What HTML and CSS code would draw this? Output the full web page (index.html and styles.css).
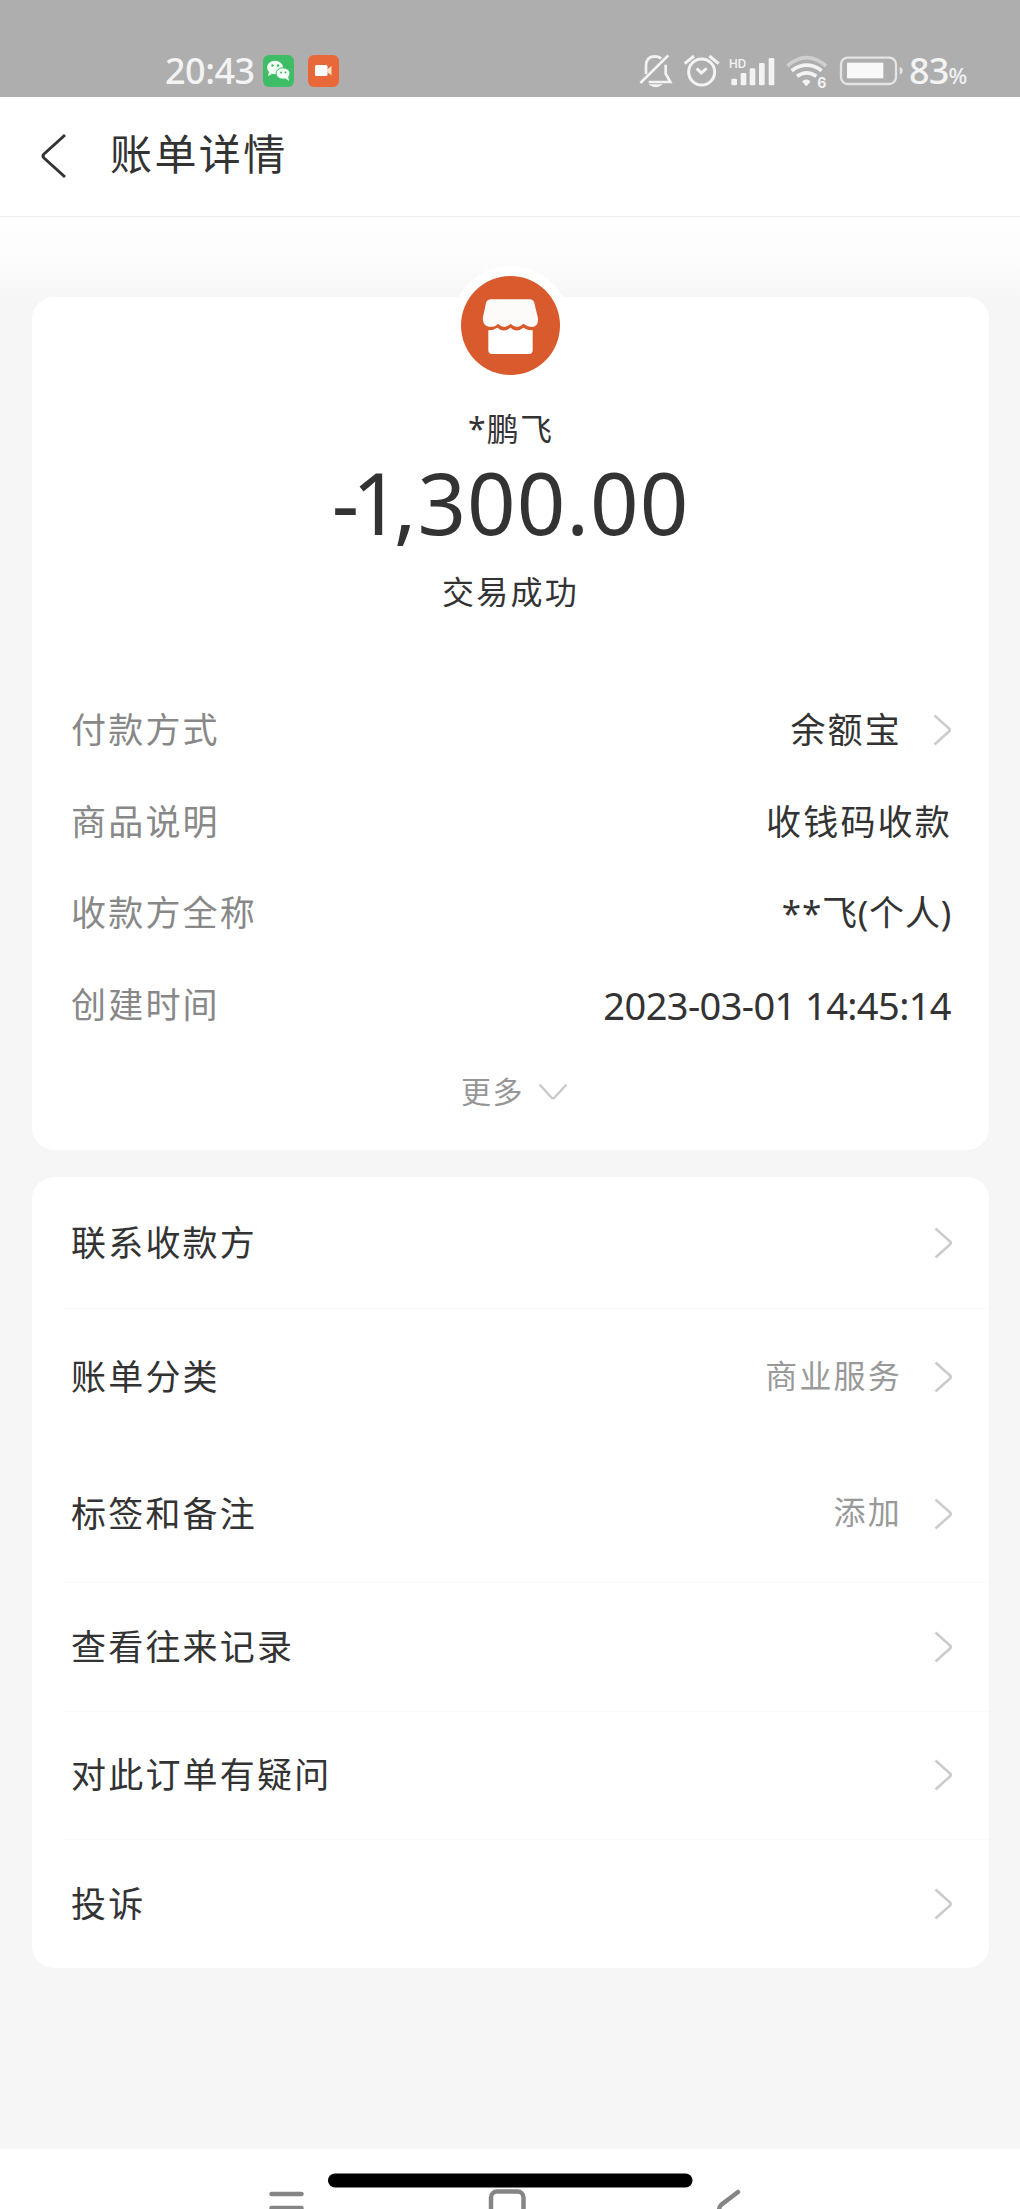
FILE: index.html
```
<!DOCTYPE html>
<html lang="zh-CN">
<head>
<meta charset="utf-8">
<title>账单详情</title>
<link rel="stylesheet" href="styles.css">
</head>
<body>
<svg width="0" height="0" class="defs">
  <symbol id="chevron" viewBox="0 0 18 32"><path d="M1.500 1.500 16 14.500q1.500 1.500 0 3L1.500 30.500" fill="none" stroke="currentColor" stroke-width="2.600"/></symbol>
</svg>
<div class="status">
  <span class="time">20:43</span>
  <svg class="app-wechat" width="31" height="32" viewBox="0 0 31 32">
    <rect width="31" height="32" rx="6" fill="#3fbd66"/>
    <ellipse cx="12" cy="12.500" rx="8" ry="6.800" fill="#f4fff6"/><path d="m6 17-1 4 4-2z" fill="#f4fff6"/>
    <ellipse cx="20" cy="18.500" rx="7" ry="5.700" fill="#f4fff6" stroke="#3fbd66"/><path d="m22 23 4 3-1-5z" fill="#f4fff6"/>
    <g fill="#3fbd66"><circle cx="9.500" cy="10.500" r="1.200"/><circle cx="15" cy="10.500" r="1.200"/><circle cx="18" cy="17.500" r="1"/><circle cx="22.500" cy="17.500" r="1"/></g>
  </svg>
  <svg class="app-video" width="31" height="32" viewBox="0 0 31 32">
    <rect width="31" height="32" rx="6" fill="#e8683a"/>
    <rect x="7" y="10" width="12.500" height="11" rx="1.500" fill="#fff"/><path d="m19 14.500 4.500-3.500v9.500L19 17z" fill="#f7e4c6"/>
  </svg>
  <svg class="signals" width="285" height="40" viewBox="50 35 855 120" fill="none" stroke="#f3f3f3" stroke-width="8">
    <path d="M60 128 144 45M77 101V78q0-29 25-30 12 0 21 6M136 73v27l14 25H85" />
    <path d="M91 134q15 10 30 0z" fill="#f3f3f3" stroke-width="4"/>
    <circle cx="244" cy="95" r="39" stroke-width="9"/><path d="m229 84 14 14 16-14" stroke-width="9"/><path d="m193 70 28-23m46 0 28 23" stroke-width="9"/>
    <g fill="#f3f3f3" stroke="none"><rect x="333" y="115" width="17" height="20" rx="4"/><rect x="361" y="98" width="17" height="37" rx="4"/><rect x="388" y="84" width="17" height="51" rx="4"/><rect x="416" y="68" width="17" height="67" rx="4"/><rect x="445" y="53" width="17" height="82" rx="4"/></g>
    <text x="326" y="83" class="hd">HD</text>
    <path d="M501 77q58-50 116 0" stroke="#cfcfcf" stroke-width="11"/>
    <path d="M514 91q45-33 90 0M530 108q29-21 58 0" stroke-width="11"/>
    <path d="m547 123q11-9 22 0l-9 12h-4z" fill="#f3f3f3" stroke-width="3"/>
    <text x="591" y="143" class="gen">6</text>
    <rect x="662" y="52" width="165" height="79" rx="20" stroke="#e4e4e4" stroke-width="7"/><rect x="680" y="67" width="109" height="47" fill="#f8f8f8" stroke="none"/><path d="M838 80q9 2 9 11t-9 11z" fill="#e4e4e4" stroke="none"/>
  </svg>
  <span class="level">83<small>%</small></span>
</div>
<header class="header">
  <svg width="27" height="46" viewBox="0 0 27 46"><path d="M25 2 4 21q-2 2 0 4l21 19" fill="none" stroke="#333" stroke-width="3"/></svg>
  <h1>账单详情</h1>
</header>
<main class="main">
  <section class="card bill">
    <div class="avatar">
      <svg width="99" height="99" viewBox="0 0 297 297"><circle cx="148.500" cy="148.500" r="148.500" fill="#d95b2d"/><path d="M90 70H206q11 0 14 11l11 46q2 24-19 26-12 0-25-10-19 20-38 0-19 20-38 0-11 12-28 9-20-4-17-29l9-42q3-11 15-11z" fill="#fdfbfa"/><path d="M82 163q16 0 27-8 19 17 39 0 19 17 39 0 11 8 28 8v60q0 11-11 11H93q-11 0-11-11z" fill="#fff"/></svg>
    </div>
    <div class="payee">*鹏飞</div>
    <div class="amount"><span class="lead">-1</span>,300.00</div>
    <div class="state">交易成功</div>
    <div class="details">
      <div class="detail"><span class="label">付款方式</span><span class="linked">余额宝</span><svg class="arrow"><use href="#chevron"/></svg></div>
      <div class="detail"><span class="label">商品说明</span><span class="value">收钱码收款</span></div>
      <div class="detail"><span class="label">收款方全称</span><span class="value person">**飞(个人)</span></div>
      <div class="detail"><span class="label">创建时间</span><span class="value date">2023-03-01 14:45:14</span></div>
    </div>
    <div class="more"><span>更多</span><svg width="30" height="18" viewBox="0 0 30 18"><path d="m1.500 1.500 12 13q1.500 1.500 3 0l12-13" fill="none" stroke="#c9c9c9" stroke-width="2.400"/></svg></div>
  </section>
  <section class="card menu">
    <div class="row contact"><span>联系收款方</span><svg class="arrow"><use href="#chevron"/></svg></div>
    <div class="row category"><span>账单分类</span><em>商业服务</em><svg class="arrow"><use href="#chevron"/></svg></div>
    <div class="row tags"><span>标签和备注</span><em>添加</em><svg class="arrow"><use href="#chevron"/></svg></div>
    <div class="row"><span>查看往来记录</span><svg class="arrow"><use href="#chevron"/></svg></div>
    <div class="row"><span>对此订单有疑问</span><svg class="arrow"><use href="#chevron"/></svg></div>
    <div class="row"><span>投诉</span><svg class="arrow"><use href="#chevron"/></svg></div>
  </section>
</main>
<footer class="nav">
  <svg width="1020" height="60" viewBox="0 2149 1020 60" fill="none" stroke="#858585" stroke-width="4.500" stroke-linecap="round">
    <path d="M271.500 2194h30M271.500 2208h30"/><rect x="491" y="2191.500" width="32.500" height="32" rx="6"/><path d="m738 2192-17 13q-2 2-2 6"/>
    <path d="M335 2180.500h350.500" stroke="#000" stroke-width="14"/>
  </svg>
</footer>
</body>
</html>
```
FILE: styles.css
```
* { box-sizing: border-box; }
body {
  margin: 0;
  height: 2209px;
  overflow: hidden;
  display: flex;
  flex-direction: column;
  background: #f6f6f6;
  color: #333;
  font-family: "Noto Sans", "Noto Sans CJK SC", sans-serif;
}
svg { display: block; flex: none; }
.defs { position: absolute; }
.status {
  height: 97px;
  padding: 45px 0 0 165px;
  display: flex;
  background: #aeaeae;
  color: #f3f3f3;
  font-weight: 500;
}
.time {
  width: 98px;
  line-height: 52px;
  font-size: 36px;
  letter-spacing: -0.5px;
  white-space: nowrap;
}
.app-wechat { margin-top: 10px; }
.app-video { margin: 10px 0 0 14px; }
.signals { margin: 7px 0 0 298px; }
.hd { font: 600 35px Inter, sans-serif; fill: #f3f3f3; stroke: none; }
.gen { font: 700 42px Inter, sans-serif; fill: #f3f3f3; stroke: none; }
.level {
  margin-left: -13px;
  line-height: 52px;
  font-size: 36px;
  letter-spacing: -0.8px;
  white-space: nowrap;
}
.level small { font-size: 22px; }
.header {
  height: 120px;
  padding: 0 0 7px 40px;
  display: flex;
  align-items: center;
  gap: 43px;
  background: #fff;
  border-bottom: 1px solid #eee;
}
.header svg { margin-top: 5px; }
.header h1 {
  margin: 1px 0 0;
  line-height: 60px;
  font-size: 42px;
  font-weight: 400;
  letter-spacing: 2.400px;
}
.main {
  height: 1932px;
  padding: 80px 31px 0 32px;
  background: linear-gradient(#fefefe 0, #fdfdfd 35px, #f6f6f6 85px);
}
.card { background: #fff; border-radius: 22px; }
.bill {
  height: 853px;
  display: flex;
  flex-direction: column;
  align-items: center;
}
.avatar {
  margin-top: -31px;
  padding: 10px;
  border-radius: 50%;
  background: #fff;
}
.payee, .state {
  height: 46px;
  line-height: 46px;
  font-size: 32px;
  letter-spacing: 2.300px;
}
.payee { margin-top: 21px; letter-spacing: 1.200px; }
.amount {
  height: 100px;
  margin-top: 0;
  line-height: 100px;
  font-size: 85px;
  letter-spacing: 1px;
}
.amount .lead { letter-spacing: -7px; }
.state { margin-top: 17px; }
.details { width: 100%; margin-top: 69px; padding: 0 38px 0 39px; }
.detail {
  height: 91.500px;
  display: flex;
  align-items: center;
  line-height: 50px;
  font-size: 35px;
  letter-spacing: 2.200px;
}
.detail span { padding-top: 1px; }
.label { color: #888; }
.value, .linked { margin-left: auto; margin-right: -1px; }
.date { font-size: 38px; letter-spacing: -0.6px; margin-right: 0; }
.person { letter-spacing: 0.8px; }
.arrow { width: 18px; height: 32px; margin-left: 32px; color: #ccc; }
.more {
  margin: 18px 0 0 8px;
  height: 44px;
  display: flex;
  align-items: center;
  gap: 14px;
  font-size: 30px;
  letter-spacing: 1.500px;
  color: #969696;
}
.more svg { margin-top: 4px; }
.menu { height: 791px; margin-top: 27px; }
.row {
  height: 128.500px;
  margin-left: 32px;
  padding: 0 37px 0 7px;
  display: flex;
  align-items: center;
  border-bottom: 1px solid #fafafa;
  line-height: 50px;
  font-size: 35px;
  letter-spacing: 2.200px;
}
.row .arrow { margin-left: auto; }
.row em {
  margin-left: auto;
  padding-bottom: 3px;
  font-style: normal;
  font-size: 32px;
  color: #999;
}
.row em + .arrow { margin-left: 32px; }
.contact { height: 132px; }
.category { height: 136px; border: 0; }
.tags { height: 138px; }
.row:last-child { border: 0; }
.nav { height: 60px; background: #fff; }
```
